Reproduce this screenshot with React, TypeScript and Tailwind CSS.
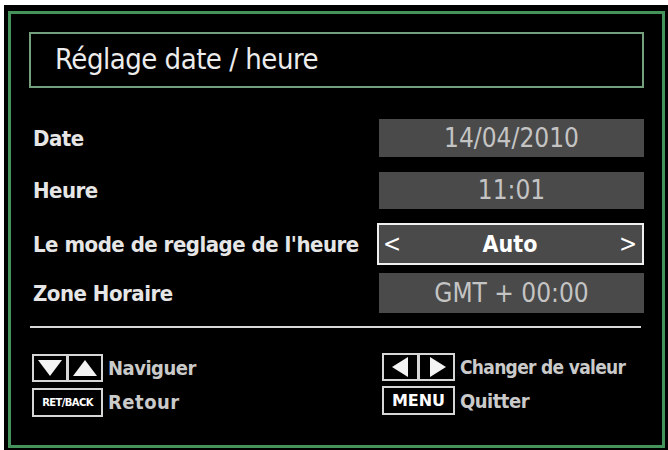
const font = { fontFamily: '"DejaVu Sans Condensed", "DejaVu Sans", sans-serif' };

function Row({ label, value, selected, className }: { label: string; value: string; selected?: boolean; className: string }) {
  return (
    <div className={`flex items-center justify-between ${className}`}>
      <div className="text-[22px] font-bold text-[#e6e6e6] tracking-[-0.5px]">{label}</div>
      {selected ? (
        <div className="flex h-[42px] w-[267px] items-center justify-between border-2 border-[#f0f0f0] bg-[#4a4a4a] pl-[4px] pr-[5px] text-white">
          <span className="text-[24px]">&lt;</span>
          <span className="text-[23px] font-bold">{value}</span>
          <span className="text-[24px]">&gt;</span>
        </div>
      ) : (
        <div className="flex h-full w-[265px] items-center justify-center bg-[#4a4a4a] text-[26px] text-[#c4c4c4]">
          {value}
        </div>
      )}
    </div>
  );
}

function KeyBox({ children, className }: { children: React.ReactNode; className: string }) {
  return (
    <div className={`flex items-center justify-center border-2 border-[#d6d6d6] ${className}`}>{children}</div>
  );
}

function Tri({ dir }: { dir: 'up' | 'down' | 'left' | 'right' }) {
  const pts = {
    down: '0,2 24,2 12,18',
    up: '0,18 24,18 12,2',
    left: '2,10 18,0 18,20',
    right: '4,0 20,10 4,20',
  }[dir];
  const w = dir === 'up' || dir === 'down' ? 24 : 22;
  return (
    <svg width={w} height="20" viewBox={`0 0 ${w} 20`}>
      <polygon points={pts} fill="#f4f4f4" />
    </svg>
  );
}

export default function App() {
  return (
    <div className="h-[450px] w-[668px] bg-white pl-[4px] pt-[5px]" style={font}>
      <div className="h-[445px] w-[664px] bg-black pb-[2px] pl-[4px] pr-[3px] pt-[6px]">
        <div className="flex h-full flex-col border-[3px] border-[#43935a] pl-[18px] pr-[18px] pt-[18px]">
          <div className="flex h-[56px] items-center border-2 border-[#75a07d] pl-[24px]">
            <span className="text-[29px] text-[#ececec] tracking-[-0.5px]">Réglage date / heure</span>
          </div>

          <div className="flex flex-col pl-[4px] pr-[0px]">
            <Row label="Date" value="14/04/2010" className="mt-[31px] h-[38px]" />
            <Row label="Heure" value="11:01" className="mt-[15px] h-[37px]" />
            <Row label="Le mode de reglage de l'heure" value="Auto" selected className="mt-[14px] h-[42px]" />
            <Row label="Zone Horaire" value="GMT + 00:00" className="mt-[8px] h-[40px]" />
          </div>

          <div className="ml-px mr-[3px] mt-[13px] h-[2px] bg-[#d8d8d8]" />

          <div className="mt-[25px] flex pl-[3px]">
            <div className="flex w-[350px] flex-col gap-[4px]">
              <div className="flex items-center gap-[5px]">
                <div className="flex">
                  <KeyBox className="h-[28px] w-[36px]"><Tri dir="down" /></KeyBox>
                  <KeyBox className="ml-[-1px] h-[28px] w-[36px]"><Tri dir="up" /></KeyBox>
                </div>
                <span className="text-[20px] font-bold text-[#cacaca] tracking-[-0.5px]">Naviguer</span>
              </div>
              <div className="flex items-center gap-[5px]">
                <KeyBox className="h-[29px] w-[71px]">
                  <span className="text-[10px] font-bold text-white tracking-[-0.6px]" style={{ fontFamily: '"DejaVu Sans", sans-serif' }}>RET/BACK</span>
                </KeyBox>
                <span className="text-[20px] font-bold text-[#cacaca] tracking-[0.5px]">Retour</span>
              </div>
            </div>
            <div className="flex flex-col gap-[4px]">
              <div className="flex items-center gap-[5px]">
                <div className="flex">
                  <KeyBox className="h-[28px] w-[37px]"><Tri dir="left" /></KeyBox>
                  <KeyBox className="ml-[-1px] h-[28px] w-[37px]"><Tri dir="right" /></KeyBox>
                </div>
                <span className="text-[19px] font-bold text-[#cacaca] tracking-[-0.7px]">Changer de valeur</span>
              </div>
              <div className="flex items-center gap-[5px]">
                <KeyBox className="h-[29px] w-[73px]">
                  <span className="text-[16px] font-bold text-white" style={{ fontFamily: '"DejaVu Sans", sans-serif' }}>MENU</span>
                </KeyBox>
                <span className="text-[20px] font-bold text-[#cacaca] tracking-[-0.5px]">Quitter</span>
              </div>
            </div>
          </div>
        </div>
      </div>
    </div>
  );
}
